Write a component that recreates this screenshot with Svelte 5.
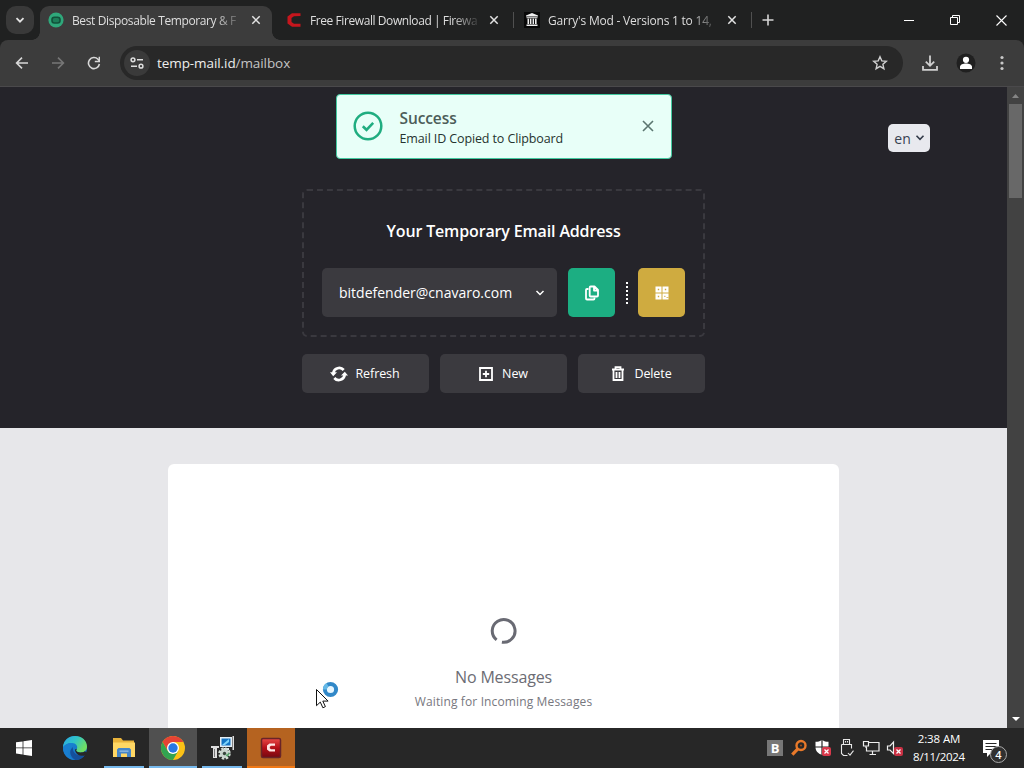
<script lang="ts">
  const tabs = [
    { title: 'Best Disposable Temporary & F', icon: 'mail', active: true, spacing: -0.38 },
    { title: 'Free Firewall Download | Firewa', icon: 'comodo', active: false, spacing: -0.42 },
    { title: "Garry's Mod - Versions 1 to 14,", icon: 'archive', active: false, spacing: -0.22 },
  ];

  let toastVisible = $state(true);
  let email = $state('bitdefender@cnavaro.com');

  async function copyEmail() {
    try {
      await navigator.clipboard.writeText(email);
      toastVisible = true;
    } catch (error) {
      console.error('Failed to copy email:', error);
    }
  }
</script>

<div class="desktop">
  <header class="tab-strip">
    <button class="tab-search" aria-label="Search tabs">
      <svg width="10" height="10" viewBox="0 0 10 10"><path d="M1.5 3.2 5 6.7l3.5-3.5" fill="none" stroke="#e3e3e3" stroke-width="1.8" /></svg>
    </button>
    {#each tabs as tab}
      <div class="tab" class:active={tab.active}>
        <svg class="favicon" width="16" height="16" viewBox="0 0 16 16">
          {#if tab.icon === 'mail'}
            <circle cx="8" cy="8" r="7.6" fill="#2fa87b" />
            <rect x="4" y="5.2" width="8" height="5.8" rx="2.4" fill="#1d7e59" stroke="#12513b" stroke-width="1.6" />
          {:else if tab.icon === 'comodo'}
            <path d="M14.5 4V1.2H6L1.5 4.5v7L6 14.8h8.5v-3H8L5.5 10V6L8 4.2z" fill="#c5161d" />
          {:else}
            <rect width="16" height="16" fill="#080808" />
            <path d="M8 1 14 3.5v1H2v-1zM2.5 5.2h11v1h-11zM3.5 6.8h1.6v5.2H3.5zM6 6.8h1.4v5.2H6zM8.6 6.8H10v5.2H8.6zM11 6.8h1.6v5.2H11zM2.5 12.5h11v1.6h-11z" fill="#eee" />
          {/if}
        </svg>
        <span class="tab-title" style="letter-spacing: {tab.spacing}px">{tab.title}</span>
        <button class="tab-close" aria-label="Close tab">
          <svg width="10" height="10" viewBox="0 0 10 10"><path d="m1.3 1.3 7.4 7.4m0-7.4-7.4 7.4" stroke="#e3e3e3" stroke-width="1.5" /></svg>
        </button>
      </div>
    {/each}
    <button class="new-tab" aria-label="New tab">
      <svg width="12" height="12" viewBox="0 0 12 12"><path d="M6 .5v11M.5 6h11" stroke="#d5d5d5" stroke-width="1.6" /></svg>
    </button>
    <div class="window-controls">
      <button aria-label="Minimize"><svg width="10" height="10" viewBox="0 0 10 10"><path d="M0 5.5h10" stroke="#fff" /></svg></button>
      <button aria-label="Restore"><svg width="10" height="10" viewBox="0 0 10 10"><path d="M.5 2.5h7v7h-7zM2.5 2.5v-2h7v7h-2" fill="none" stroke="#fff" /></svg></button>
      <button aria-label="Close"><svg width="11" height="11" viewBox="0 0 11 11"><path d="m.5.5 10 10m0-10-10 10" stroke="#fff" stroke-width="1.1" /></svg></button>
    </div>
  </header>

  <nav class="toolbar">
    <button class="nav-btn" aria-label="Back">
      <svg width="14" height="14" viewBox="0 0 14 14"><path d="M13 7H1.8M7 1.6 1.6 7 7 12.4" fill="none" stroke="#d8d8d8" stroke-width="1.6" /></svg>
    </button>
    <button class="nav-btn" aria-label="Forward">
      <svg width="14" height="14" viewBox="0 0 14 14"><path d="M1 7h11.2M7 1.6 12.4 7 7 12.4" fill="none" stroke="#777" stroke-width="1.6" /></svg>
    </button>
    <button class="nav-btn" aria-label="Reload">
      <svg width="14" height="14" viewBox="0 0 14 14"><path d="M12.4 8A5.5 5.5 0 1 1 11 3.3L12.5 5" fill="none" stroke="#d8d8d8" stroke-width="1.6" /><path d="M13 .8v5.4H7.8V4.8h3.8V.8z" fill="#d8d8d8" /></svg>
    </button>
    <div class="omnibox">
      <span class="site-info">
        <svg width="14" height="12" viewBox="0 0 14 12" fill="none" stroke="#dedede" stroke-width="1.5"><circle cx="3" cy="2.8" r="1.9" /><path d="M7 2.8h6M1 9.2h6" /><circle cx="11" cy="9.2" r="1.9" /></svg>
      </span>
      <span class="url">temp-mail.id<span>/mailbox</span></span>
      <svg class="star" width="16" height="16" viewBox="0 0 16 16"><path d="m8 1.8 1.8 4.1 4.5.4-3.4 3 1 4.4L8 11.4l-3.9 2.3 1-4.4-3.4-3 4.5-.4z" fill="none" stroke="#d0d0d0" stroke-width="1.4" /></svg>
    </div>
    <svg class="download" width="18" height="18" viewBox="0 0 18 18"><path d="M9 1.5v10M4.8 7.6 9 11.8l4.2-4.2M2 12v3.8h14V12" fill="none" stroke="#d0d0d0" stroke-width="1.8" /></svg>
    <svg class="profile" width="20" height="20" viewBox="0 0 20 20"><circle cx="10" cy="10" r="9.5" fill="#202020" /><circle cx="10" cy="6.8" r="3.1" fill="#fff" /><path d="M4 16v-2c0-2.3 3.2-3.4 6-3.4s6 1.1 6 3.4v2z" fill="#fff" /></svg>
    <svg class="kebab" width="4" height="16" viewBox="0 0 4 16" fill="#c8c8c8"><circle cx="2" cy="2.5" r="1.6" /><circle cx="2" cy="8" r="1.6" /><circle cx="2" cy="13.5" r="1.6" /></svg>
  </nav>

  <div class="viewport">
    <main class="page">
      <section class="hero">
        <button class="lang">en
          <svg width="10" height="8" viewBox="0 0 10 8"><path d="M1.5 1.8 5 5.3l3.5-3.5" fill="none" stroke="#333b49" stroke-width="1.6" /></svg>
        </button>

        {#if toastVisible}
          <div class="toast">
            <svg class="toast-icon" width="30" height="30" viewBox="0 0 30 30" fill="none" stroke="#20ad80"><circle cx="15" cy="15" r="13.3" stroke-width="2.5" /><path d="m9.8 15.3 3.7 3.5 6.7-6.9" stroke-width="2.6" /></svg>
            <div class="toast-text">
              <strong>Success</strong>
              <span>Email ID Copied to Clipboard</span>
            </div>
            <button class="toast-close" aria-label="Dismiss" onclick={() => (toastVisible = false)}>
              <svg width="12" height="12" viewBox="0 0 12 12"><path d="m1 1 10 10M11 1 1 11" stroke="#5b7670" stroke-width="1.6" /></svg>
            </button>
          </div>
        {/if}

        <div class="address-box">
          <h1>Your Temporary Email Address</h1>
          <div class="address-row">
            <button class="address">
              <span>{email}</span>
              <svg width="10" height="8" viewBox="0 0 10 8"><path d="M1.5 2 5 5.5 8.5 2" fill="none" stroke="#fff" stroke-width="1.5" /></svg>
            </button>
            <button class="square copy" aria-label="Copy" onclick={copyEmail}>
              <svg width="14" height="16" viewBox="0 0 14 16" fill="none" stroke="#fff" stroke-width="1.8" stroke-linejoin="round"><path d="M5.7 1.5h3.8L13 5v5.5q0 1-1 1H5.7q-1 0-1-1v-8q0-1 1-1zM9 1.8v3.7h3.7" /><path d="M3.5 4H2Q1 4 1 5v8.5q0 1 1 1h6.500q1 0 1-1v-1" /></svg>
            </button>
            <span class="dots"></span>
            <button class="square qr" aria-label="QR code">
              <svg width="14" height="14" viewBox="0 0 14 14"><path d="M.5.5h6v6h-6zM7.5.5h6v6h-6zM.5 7.5h6v6h-6zM7.5 7.5h6v6h-6z" fill="#fff" /><path d="M2.8 2.8h1.4v1.4H2.8zM9.800 2.8h1.4v1.4H9.8zM2.8 9.8h1.4v1.400H2.8zM9.3 9.800h1.100v1.100H9.300zM11.500 11h2v.8h-2z" fill="#cfab40" /></svg>
            </button>
          </div>
        </div>

        <div class="actions">
          <button class="refresh">
            <svg width="18" height="16" viewBox="0 0 18 16"><path d="M3.3 7A6 6 0 0 1 13.7 4M14.7 9A6 6 0 0 1 4.3 12" fill="none" stroke="#fff" stroke-width="2.7" /><path d="M0 6.2h7L3.2 10.3zM18 9.5h-7l3.8-3.8z" fill="#fff" /></svg>
            <span>Refresh</span>
          </button>
          <button>
            <svg class="plus" width="14" height="14" viewBox="0 0 14 14"><path d="M1 1h12v12H1zM7 3.8v6.4M3.8 7h6.4" fill="none" stroke="#fff" stroke-width="1.8" /></svg>
            <span>New</span>
          </button>
          <button>
            <svg class="bin" width="14" height="15" viewBox="0 0 14 15"><path d="M1 3.5h12M4.5 3V1.2h5V3M2.5 4v10h9V4M5.5 6v6M8.5 6v6" fill="none" stroke="#fff" stroke-width="1.8" /></svg>
            <span>Delete</span>
          </button>
        </div>
      </section>

      <section class="inbox">
        <div class="messages">
          <svg width="28" height="28" viewBox="0 0 28 28"><path d="M6.6 22.9a11.4 11.4 0 1 1 5.3 2.3" fill="none" stroke="#696a73" stroke-width="3" /></svg>
          <h2>No Messages</h2>
          <p>Waiting for Incoming Messages</p>
        </div>
      </section>
    </main>

    <div class="scrollbar">
      <svg width="7" height="4" viewBox="0 0 7 4"><path d="m0 4 3.5-4L7 4z" fill="#858585" /></svg>
      <div class="thumb"></div>
      <svg class="down" width="8" height="4" viewBox="0 0 8 4"><path d="m0 0 4 4 4-4z" fill="#fff" /></svg>
    </div>
  </div>

  <footer class="taskbar">
    <div class="task start">
      <svg width="16" height="16" viewBox="0 0 16 16" fill="#fff"><path d="M0 2.3 6.6 1.4v6.1H0zM7.4 1.3 16 0v7.5H7.4zM0 8.3h6.6v6.2L0 13.6zM7.4 8.3H16V16l-8.6-1.2z" /></svg>
    </div>
    <div class="task">
      <svg width="24" height="24" viewBox="0 0 24 24">
        <defs>
          <linearGradient id="edge-top" x1="0" y1="0" x2="1" y2=".5"><stop offset="0" stop-color="#2aa6e8" /><stop offset=".5" stop-color="#30c4c8" /><stop offset="1" stop-color="#70de62" /></linearGradient>
          <linearGradient id="edge-base" x1="0" y1="0" x2="1" y2="1"><stop offset="0" stop-color="#1b8fdd" /><stop offset="1" stop-color="#1266b8" /></linearGradient>
        </defs>
        <circle cx="12" cy="12" r="12" fill="url(#edge-base)" />
        <path d="M0 11C.5 4.5 5.5 0 12 0c7 0 12 4.7 12 10.5 0 4-3 6-6.5 6-3 0-4.5-1-4.5-2 0-.8 1.2-1.2 1.2-3.3C14.2 8.500 11.500 7 8.500 7 4.500 7 1.500 9 0 11z" fill="url(#edge-top)" />
        <path d="M8.5 7C5.5 8.5 4 11.5 4.5 15c.6 4 3.5 7.5 7.5 9C5 24 .3 18.500 0 12c1.500-3.500 5-5 8.500-5z" fill="#197ed0" />
        <path d="M10 11c-1 5 3.5 8.5 8 8.5 2 0 3.5-.6 4.3-1.1C20 22 16.500 24 12.500 24 8 22 4.500 15 10 11z" fill="#154f9b" />
        <path d="M14 12.7c-1 1.5-1.2 2 .4 3 1.8 1 5.6 1 7.6-.5l2 1.8-1.7 2.4c-5 1.4-10-1-10.3-6z" fill="#272727" />
      </svg>
    </div>
    <div class="task open">
      <svg width="24" height="22" viewBox="0 0 24 22"><path d="M1 1h8l2 2.5h11V20H1z" fill="#e9b33b" /><path d="M1 5.5h22V20H1z" fill="#ffd764" /><path d="M5 20v-7.500L6.500 11h11l1.500 1.500V20h-4v-3.500H9V20z" fill="#4686c8" /><path d="M7.5 13.5h9v1.3h-9z" fill="#93bfe4" /></svg>
    </div>
    <div class="task open current">
      <svg width="26" height="26" viewBox="0 0 26 26">
        <circle cx="13" cy="13" r="12" fill="#fbc116" />
        <path d="M13 7h10.4A12 12 0 0 0 2.6 7l5.2 9z" fill="#e54335" />
        <path d="M2.6 7 7.8 16 13 19l5.2-3L13 25A12 12 0 0 1 2.6 7z" fill="#32a351" />
        <circle cx="13" cy="13" r="6" fill="#fff" /><circle cx="13" cy="13" r="4.7" fill="#2878e2" />
      </svg>
    </div>
    <div class="task open">
      <svg width="24" height="24" viewBox="0 0 24 24">
        <path d="M10 1h12v10H10zM14 12h5v2h-5z" fill="#e4eef4" /><path d="M11.5 2.5h9v7h-9z" fill="#1475c4" /><path d="m12 9 7-6v3l-4 3z" fill="#7cd3fa" />
        <path d="M22.500 0H24v14h-1.500zM1 10h8v2H1zM3 12h4v10H3z" fill="#dedede" /><path d="M4 13h1v8H4z" fill="#777" />
        <circle cx="14.5" cy="17.5" r="4.5" fill="#c8d2cc" /><circle cx="14.5" cy="17.5" r="5" fill="none" stroke="#d2ddd5" stroke-width="2.5" stroke-dasharray="2.5 1.43" /><circle cx="14.5" cy="17.5" r="1.7" fill="#37443b" /><path d="M15 18.5c3 .5 3-1 3-2.5l1.5 2-2 3z" fill="#59a46b" />
      </svg>
    </div>
    <div class="task comodo">
      <svg width="22" height="22" viewBox="0 0 22 22">
        <defs><linearGradient id="comodo-red" x1="0" y1="0" x2="0" y2="1"><stop offset="0" stop-color="#e94946" /><stop offset=".5" stop-color="#b40f18" /><stop offset="1" stop-color="#760810" /></linearGradient></defs>
        <rect x="1.5" y="1.5" width="19" height="19" rx="1.5" fill="url(#comodo-red)" stroke="#6a2428" stroke-width="1.5" /><path d="M15 6.5H9.5L7 8.5v4l2.5 2H15v-2.2h-4l-1.200-1V9.700l1.200-1H15z" fill="#ffe6e3" />
      </svg>
    </div>

    <div class="tray">
      <span class="tray-b">B</span>
      <svg width="18" height="18" viewBox="0 0 18 18" fill="none" stroke="#e8792a"><circle cx="11" cy="6.5" r="4.5" stroke-width="2.4" /><path d="m7.8 9.8-5.5 5.8" stroke-width="3.2" /><circle cx="11" cy="6.5" r="1" fill="#a94c15" stroke="none" /></svg>
      <svg width="18" height="18" viewBox="0 0 18 18"><path d="M8 1c2 1.3 4 1.8 6.5 1.8v5.5C14.5 12 12 14.5 8 16c-4-1.5-6.5-4-6.5-7.7V2.8C4 2.8 6 2.3 8 1z" fill="#fff" /><path d="M8 1v15M1 8h14" stroke="#272727" stroke-width="1.2" /><rect x="8" y="8" width="9" height="9" rx="2" fill="#d8394b" /><path d="m10.5 10.5 4 4m0-4-4 4" stroke="#fff" stroke-width="1.3" /></svg>
      <svg width="18" height="18" viewBox="0 0 18 18" fill="none" stroke="#e7e7e7" stroke-width="1.1"><path d="M5.5 5.5v-5h6v5M3.5 5.5h10v4M3.5 5.5v9l2 2h4M7.5 2v1.5M9.5 2v1.5" /><path d="m10 14 2 2.2 3.5-4.5" /></svg>
      <svg width="18" height="18" viewBox="0 0 18 18" fill="none" stroke="#eee" stroke-width="1.2"><path d="M6.5 3.5H17V12H4.5V8M10.5 12v3.5M7.5 15.5H14M1.5 2.5h5V7h-5zM4 7v2" /></svg>
      <svg width="18" height="18" viewBox="0 0 18 18"><path d="M1.5 7H4l3.5-4v11.500L4 11H1.500z" fill="none" stroke="#eee" stroke-width="1.2" /><rect x="8" y="8" width="9" height="9" rx="2" fill="#c93043" /><path d="m10.5 10.5 4 4m0-4-4 4" stroke="#fff" stroke-width="1.3" /></svg>
    </div>
    <div class="clock">
      <span class="time">2:38 AM</span>
      <span>8/11/2024</span>
    </div>
    <div class="notifications">
      <svg width="18" height="17" viewBox="0 0 18 17"><path d="M1 0h16v13H9l-4 4v-4H1z" fill="#fff" /><path d="M3.5 3.5h11M3.5 6.5h11M3.5 9.5h7" stroke="#272727" stroke-width="1.2" /></svg>
      <span class="badge">4</span>
    </div>
  </footer>

  <svg class="cursor" width="26" height="30" viewBox="0 0 26 30">
    <path d="M1.5 9.5v16.2l3.8-3.6 2.6 5.7 2.5-1.2-2.6-5.5h5.3z" fill="#fff" stroke="#111" />
    <circle cx="15.5" cy="9.5" r="5.6" fill="#e6f6ff" stroke="#3188c8" stroke-width="4" />
    <path d="M9.9 9.5a5.6 5.6 0 0 1 2.6-4.8" fill="none" stroke="#65b9e7" stroke-width="4" />
  </svg>
</div>

<style>
  :global(body) {
    margin: 0;
    overflow: hidden;
  }

  .desktop {
    position: relative;
    display: flex;
    flex-direction: column;
    width: 1024px;
    height: 768px;
    overflow: hidden;
    font-family: 'Open Sans', 'Noto Sans', sans-serif;
    background: #202121;
  }

  .desktop * {
    box-sizing: border-box;
  }

  button {
    display: flex;
    align-items: center;
    justify-content: center;
    padding: 0;
    border: none;
    background: none;
    color: inherit;
    font: inherit;
  }

  svg {
    flex-shrink: 0;
  }

  .tab-strip {
    display: flex;
    align-items: flex-start;
    height: 40px;
    flex-shrink: 0;
    color: #dedede;
    font-size: 12px;
  }

  .tab-search {
    width: 28px;
    height: 28px;
    margin: 6px 6px 0;
    border-radius: 10px;
    background: #393939;
    flex-shrink: 0;
  }

  .tab {
    position: relative;
    display: flex;
    align-items: center;
    width: 238px;
    height: 28px;
    margin-top: 6px;
    padding: 0 11px 0 14px;
    flex-shrink: 0;
  }

  .tab:not(.active)::after {
    content: '';
    position: absolute;
    right: 0;
    top: 6px;
    width: 1px;
    height: 16px;
    background: #505050;
  }

  .tab.active {
    width: 232px;
    height: 34px;
    padding: 0 8px 6px;
    border-radius: 9px 9px 0 0;
    background: #3c3c3c;
  }

  .tab.active::before,
  .tab.active::after {
    content: '';
    position: absolute;
    bottom: 0;
    width: 8px;
    height: 8px;
  }

  .tab.active::before {
    left: -8px;
    background: radial-gradient(circle at 0 0, transparent 7.5px, #3c3c3c 8px);
  }

  .tab.active::after {
    right: -8px;
    background: radial-gradient(circle at 100% 0, transparent 7.5px, #3c3c3c 8px);
  }

  .tab.active + .tab {
    width: 242px;
  }

  .tab.active + .tab + .tab {
    width: 238px;
    padding-left: 10px;
  }

  .tab-title {
    width: 168px;
    margin-left: 8px;
    padding-top: 2px;
    overflow: hidden;
    white-space: nowrap;
    line-height: 20px;
    mask-image: linear-gradient(to right, #000 142px, transparent 172px);
  }

  .tab-close {
    width: 16px;
    height: 16px;
    margin-left: 8px;
  }

  .new-tab {
    width: 28px;
    height: 28px;
    margin: 6px 0 0 2px;
  }

  .window-controls {
    display: flex;
    margin-left: auto;
  }

  .window-controls button {
    width: 46px;
    height: 40px;
  }

  .toolbar {
    display: flex;
    align-items: center;
    height: 47px;
    flex-shrink: 0;
    padding: 0 20px 0 4px;
    border-radius: 8px 8px 0 0;
    border-bottom: 1px solid #4a494b;
    background: #3c3c3c;
  }

  .nav-btn {
    width: 36px;
    height: 34px;
  }

  .omnibox {
    display: flex;
    align-items: center;
    width: 783px;
    height: 34px;
    margin-left: 8px;
    padding: 0 15px 0 4px;
    border-radius: 17px;
    background: #282828;
  }

  .site-info {
    display: flex;
    align-items: center;
    justify-content: center;
    width: 26px;
    height: 26px;
    border-radius: 50%;
    background: #3a3a3a;
  }

  .url {
    margin-left: 7px;
    color: #eee;
    font-size: 13.5px;
    letter-spacing: -0.08px;
  }

  .url span {
    color: #c5c5c5;
  }

  .star {
    margin-left: auto;
  }

  .download {
    margin-left: 18px;
  }

  .profile {
    margin-left: 17px;
  }

  .kebab {
    margin-left: auto;
  }

  .viewport {
    display: flex;
    height: 641px;
    flex-shrink: 0;
  }

  .page {
    width: 1007px;
    overflow: hidden;
    background: #e7e7ea;
  }

  .hero {
    position: relative;
    display: flex;
    flex-direction: column;
    align-items: center;
    height: 341px;
    padding-top: 102px;
    background: #25242a;
    color: #fff;
  }

  .lang {
    position: absolute;
    top: 37px;
    left: 888px;
    gap: 4px;
    width: 42px;
    height: 28px;
    padding-left: 1px;
    border-radius: 5px;
    background: #e8e9ee;
    color: #374151;
    font-size: 14px;
  }

  .toast {
    position: absolute;
    top: 7px;
    left: 336px;
    display: flex;
    align-items: center;
    width: 336px;
    height: 65px;
    padding: 0 17px 1px 16px;
    border: 1px solid #42c9a0;
    border-radius: 4px;
    background: #e8fff8;
  }

  .toast-text {
    display: flex;
    flex-direction: column;
    margin: 3px auto 0 16.5px;
  }

  .toast strong {
    color: #4c5d59;
    font-size: 15.5px;
    font-weight: 600;
    line-height: 22px;
    letter-spacing: -0.1px;
  }

  .toast-text span {
    color: #26332f;
    font-size: 12.5px;
    line-height: 19px;
    letter-spacing: -0.12px;
  }

  .address-box {
    width: 403px;
    height: 148px;
    padding: 28px 18px 0;
    border: 2px dashed #3a393f;
    border-radius: 5px;
  }

  h1 {
    margin: 0;
    font-size: 16px;
    font-weight: 600;
    line-height: 24px;
    letter-spacing: -0.15px;
    text-align: center;
  }

  .address-row {
    display: flex;
    align-items: center;
    margin-top: 25px;
  }

  .address {
    justify-content: space-between;
    width: 235px;
    height: 49px;
    padding: 0 12px 0 17px;
    border-radius: 5px;
    background: #3b3a3f;
    font-size: 14px;
    font-weight: 500;
  }

  .square {
    width: 47px;
    height: 49px;
    border-radius: 5px;
  }

  .copy {
    margin-left: 11px;
    background: #1cae82;
  }

  .qr {
    background: #cfab40;
  }

  .dots {
    width: 2px;
    height: 22px;
    margin: 0 10px 0 11px;
    background: repeating-linear-gradient(#fff 0 2px, transparent 2px 4px);
  }

  .actions {
    display: flex;
    gap: 11px;
    margin-top: 17px;
  }

  .actions button {
    gap: 8px;
    width: 127px;
    height: 39px;
    border-radius: 5px;
    background: #3b3a3f;
    font-size: 12.5px;
    font-weight: 500;
    letter-spacing: -0.1px;
  }

  .actions .refresh {
    padding-right: 2px;
  }

  .actions .plus,
  .actions .bin {
    margin-right: 1px;
  }

  .inbox {
    display: flex;
    justify-content: center;
    padding-top: 36px;
  }

  .messages {
    display: flex;
    flex-direction: column;
    align-items: center;
    width: 671px;
    height: 400px;
    padding-top: 153px;
    border-radius: 6px;
    background: #fff;
  }

  h2 {
    margin: 20px 0 0;
    color: #6c6c74;
    font-size: 16px;
    font-weight: 400;
    line-height: 24px;
    letter-spacing: -0.15px;
  }

  p {
    margin: 4px 0 0;
    color: #77777e;
    font-size: 12px;
    line-height: 18px;
    letter-spacing: 0.13px;
  }

  .scrollbar {
    display: flex;
    flex-direction: column;
    align-items: center;
    width: 17px;
    padding: 7px 0;
    background: #424242;
  }

  .thumb {
    width: 13px;
    height: 94px;
    margin-top: 6px;
    background: #686868;
  }

  .down {
    margin-top: auto;
  }

  .taskbar {
    display: flex;
    align-items: center;
    height: 40px;
    flex-shrink: 0;
    background: #272727;
    color: #fff;
  }

  .task {
    display: flex;
    align-items: center;
    justify-content: center;
    position: relative;
    width: 48px;
    height: 40px;
    margin-right: 1px;
  }

  .start {
    margin-right: 3px;
  }

  .open::after,
  .comodo::after {
    content: '';
    position: absolute;
    right: 4px;
    bottom: 0;
    left: 4px;
    height: 2px;
    background: #76b9ed;
  }

  .current {
    background: #505050;
  }

  .current::after {
    right: 0;
    left: 0;
  }

  .comodo {
    background: #b56320;
  }

  .comodo::after {
    right: 0;
    left: 0;
    background: #f07815;
  }

  .tray {
    display: flex;
    align-items: center;
    gap: 6px;
    margin-left: auto;
  }

  .tray-b {
    width: 16px;
    height: 16px;
    margin-right: 1px;
    background: #777;
    font-size: 13px;
    font-weight: 700;
    line-height: 16px;
    text-align: center;
  }

  .clock {
    display: flex;
    flex-direction: column;
    align-items: center;
    width: 64px;
    margin-left: 3px;
    font-size: 11.5px;
    line-height: 18px;
    letter-spacing: -0.3px;
  }

  .time {
    letter-spacing: -0.1px;
  }

  .notifications {
    position: relative;
    display: flex;
    width: 42px;
    height: 17px;
    margin-left: 11px;
  }

  .badge {
    position: absolute;
    top: 6px;
    left: 8px;
    width: 17px;
    height: 17px;
    border: 1px solid #aaa;
    border-radius: 50%;
    background: #303030;
    font-size: 11px;
    font-weight: 600;
    line-height: 15px;
    text-align: center;
  }

  .cursor {
    position: absolute;
    top: 680px;
    left: 315px;
  }
</style>
